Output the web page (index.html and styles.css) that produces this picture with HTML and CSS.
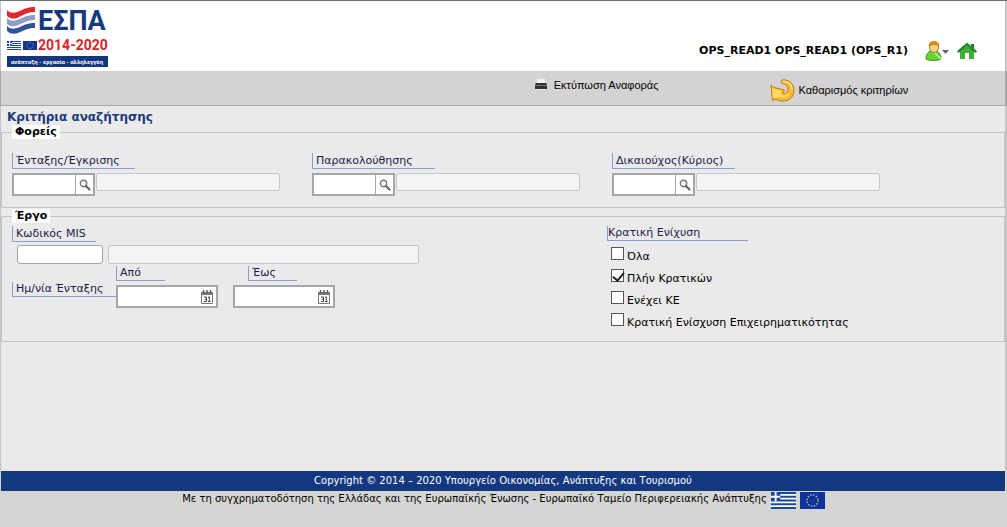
FILE: index.html
```html
<!DOCTYPE html>
<html lang="el">
<head>
<meta charset="utf-8">
<title>Κριτήρια αναζήτησης</title>
<link rel="stylesheet" href="styles.css">
</head>
<body>
<svg class="defs" aria-hidden="true">
  <symbol id="greece" viewBox="0 0 27 18" preserveAspectRatio="none">
    <path fill="#fff" d="M0 0h27v18H0z"/>
    <path fill="#17479e" d="M0 0h27v2H0zM0 4h27v2H0zM0 8h27v2H0zM0 12h27v2H0zM0 16h27v2H0zM0 0h10v10H0z"/>
    <path fill="#fff" d="M4 0h2v10H4zM0 4h10v2H0z"/>
  </symbol>
  <symbol id="europe" viewBox="0 0 27 18" preserveAspectRatio="none">
    <path fill="#10329a" d="M0 0h27v18H0z"/>
    <circle cx="13.500" cy="9" r="6" fill="none" stroke="#c9d27c" stroke-width="1.500" stroke-dasharray="1.400 1.740"/>
  </symbol>
  <symbol id="lens" viewBox="0 0 12 12">
    <circle cx="4.500" cy="4.500" r="3.200" fill="#f4f4f4" stroke="#777" stroke-width="1.400"/>
    <path d="M7 7l3.500 3.500" stroke="#666" stroke-width="2.200" stroke-linecap="round"/>
  </symbol>
  <symbol id="calendar" viewBox="0 0 12 14">
    <path d="M.5 3h11v10.500H.5z" fill="#fff" stroke="#777"/>
    <path d="M0 2h12v3H0z" fill="#777"/>
    <path d="M2.500 0v3M6 0v3M9.500 0v3" stroke="#555" stroke-width="1.400"/>
    <path d="M3 7h2.500v4.500H3M3.500 9.200h2M7 7.500l1.300-.8v5M7 11.500h2.600" fill="none" stroke="#444"/>
  </symbol>
</svg>
<div class="page">
  <header class="header">
    <svg class="logo" viewBox="0 0 102 62" role="img" aria-label="ΕΣΠΑ 2014-2020">
      <path d="M0 4C8 12 15 0 28 1v5C16 5 9 18 0 10z" fill="#e2282e"/>
      <path d="M0 12C8 20 15 8 28 9v5C16 13 9 25 0 18z" fill="#8d9cc9"/>
      <path d="M0 20C8 28 15 16 28 17v5C16 21 9 33 0 25z" fill="#32519c"/>
      <text x="31" y="24" class="logo-name">ΕΣΠΑ</text>
      <text x="31" y="44" class="logo-years">2014-2020</text>
      <use href="#greece" x="0" y="35" width="14" height="9"/>
      <use href="#europe" x="16" y="35" width="14" height="9"/>
      <path d="M0 50h101v11H0z" fill="#14357f"/>
      <text x="50" y="58" class="logo-motto">ανάπτυξη - εργασία - αλληλεγγύη</text>
    </svg>
    <div class="account">
      <span class="user">OPS_READ1 OPS_READ1 (OPS_R1)</span>
      <button class="icon-button" aria-label="Χρήστης">
        <svg width="25" height="20" viewBox="0 0 25 20">
          <path d="M1 18c0-5 2-7 5-8h5c3 1 5 4 5 8-3 2-12 2-15 0z" fill="#65d332" stroke="#36941a"/>
          <path d="M9 11l3 3 4 4" fill="none" stroke="#c6f5a5" stroke-width="1.500"/>
          <ellipse cx="9" cy="6.500" rx="4.500" ry="5" fill="#fbd58b" stroke="#b97820"/>
          <path d="M4 6C3 2 6 0 9 0s6 2 5 6c-2-2-6-3-8-1z" fill="#d78c19"/>
          <path d="M17 9h7l-3.500 4z" fill="#666"/>
        </svg>
      </button>
      <a class="icon-button" href="#" aria-label="Αρχική">
        <svg width="20" height="18" viewBox="0 0 20 18">
          <path d="M14 2h3v5h-3z" fill="#26812f"/>
          <path d="M3 8l7-6 7 6v9h-5v-6H8v6H3z" fill="#43ad3c"/>
          <path d="M1.500 9.500L10 2l8.500 7.500" fill="none" stroke="#278c31" stroke-width="2.400" stroke-linecap="round"/>
        </svg>
      </a>
    </div>
  </header>

  <nav class="toolbar">
    <button class="tool tool-print">
      <svg width="12" height="12" viewBox="0 0 12 12">
        <path d="M2 0h8v5H2z" fill="#f5f5f5"/>
        <path d="M1 4h10l1 2v4H0V6z" fill="#333"/>
        <path d="M0 6h12v1H0z" fill="#777"/>
        <path d="M2 10h8v1H2z" fill="#eee"/>
      </svg>
      Εκτύπωση Αναφοράς
    </button>
    <button class="tool tool-clear">
      <svg width="25" height="23" viewBox="0 0 25 23">
        <path d="M12 1C19 0 24 5 24 11.500S19 22 13 22c-3 0-5-.5-7-2l-3.500 1.500L1 6l3 2.500L14.500 11l-2 3c3 1 5.500-1 5.500-4s-2-5-5.500-5.500c-1.500-.5-2-2-.5-3.500z" fill="#fbb92f" stroke="#c4780f" stroke-linejoin="round"/>
        <path d="M2 8l2 1.800 8.500 2L10 15c4 2.500 8 1 9.500-2 1 4-4 7-10 5L3 19.500z" fill="#ffda66"/>
        <path d="M13 2.500c6-.5 9.500 4 9 8.500" fill="none" stroke="#ffe694" stroke-width="1.500" stroke-linecap="round"/>
      </svg>
      Καθαρισμός κριτηρίων
    </button>
  </nav>

  <main class="main">
    <h1 class="title">Κριτήρια αναζήτησης</h1>

    <fieldset class="group bodies">
      <legend>Φορείς</legend>
      <div class="lookup">
        <label class="caption caption-wide" for="approval">Ένταξης/Έγκρισης</label>
        <div class="lookup-row">
          <div class="lookup-box"><input id="approval" type="text"><button aria-label="Αναζήτηση"><svg width="12" height="12"><use href="#lens"/></svg></button></div>
          <input class="readonly" type="text" readonly aria-label="Περιγραφή ένταξης">
        </div>
      </div>
      <div class="lookup">
        <label class="caption caption-wide" for="monitor">Παρακολούθησης</label>
        <div class="lookup-row">
          <div class="lookup-box"><input id="monitor" type="text"><button aria-label="Αναζήτηση"><svg width="12" height="12"><use href="#lens"/></svg></button></div>
          <input class="readonly" type="text" readonly aria-label="Περιγραφή παρακολούθησης">
        </div>
      </div>
      <div class="lookup">
        <label class="caption caption-wide" for="owner">Δικαιούχος(Κύριος)</label>
        <div class="lookup-row">
          <div class="lookup-box"><input id="owner" type="text"><button aria-label="Αναζήτηση"><svg width="12" height="12"><use href="#lens"/></svg></button></div>
          <input class="readonly" type="text" readonly aria-label="Περιγραφή δικαιούχου">
        </div>
      </div>
    </fieldset>

    <fieldset class="group project">
      <legend>Έργο</legend>
      <div class="project-grid">
        <div class="details">
          <label class="caption caption-code" for="mis">Κωδικός MIS</label>
          <div class="code-row">
            <input id="mis" class="code" type="text">
            <input class="readonly" type="text" readonly aria-label="Τίτλος έργου">
          </div>
          <div class="dates">
            <span class="caption date-caption">Ημ/νία Ένταξης</span>
            <div class="date">
              <label class="caption caption-short" for="from">Από</label>
              <div class="date-box"><input id="from" type="text"><button aria-label="Ημερολόγιο"><svg width="12" height="14"><use href="#calendar"/></svg></button></div>
            </div>
            <div class="date">
              <label class="caption caption-short caption-inset" for="to">Έως</label>
              <div class="date-box"><input id="to" type="text"><button aria-label="Ημερολόγιο"><svg width="12" height="14"><use href="#calendar"/></svg></button></div>
            </div>
          </div>
        </div>
        <div class="aid">
          <span class="caption caption-aid">Κρατική Ενίχυση</span>
          <div class="checks">
            <label><input type="checkbox"><span>Όλα</span></label>
            <label><input type="checkbox" checked><span>Πλήν Κρατικών</span></label>
            <label><input type="checkbox"><span>Ενέχει ΚΕ</span></label>
            <label><input type="checkbox"><span>Κρατική Ενίσχυση Επιχειρηματικότητας</span></label>
          </div>
        </div>
      </div>
    </fieldset>
  </main>

  <footer class="footer">
    <p class="copyright">Copyright © 2014 – 2020 Υπουργείο Οικονομίας, Ανάπτυξης και Τουρισμού</p>
    <div class="funding">
      <span>Με τη συγχρηματοδότηση της Ελλάδας και της Ευρωπαϊκής Ένωσης - Ευρωπαϊκό Ταμείο Περιφερειακής Ανάπτυξης</span>
      <svg width="25" height="17"><use href="#greece"/></svg>
      <svg width="25" height="17"><use href="#europe"/></svg>
    </div>
  </footer>
</div>
</body>
</html>
```
FILE: styles.css
```css
* { box-sizing: border-box; }

body {
  margin: 0;
  font: 11px/14px "DejaVu Sans", Verdana, sans-serif;
  color: #000;
  background: #d4d6d3;
}

button, input { font: inherit; color: inherit; margin: 0; }
button { padding: 0; border: 0; background: none; cursor: pointer; }
input[type="text"] { min-width: 0; padding: 0 3px; border: 0; background: #fff; }
svg { display: block; flex: none; }
.defs { position: absolute; width: 0; height: 0; }

.page {
  display: flex;
  flex-direction: column;
  min-height: 100vh;
  border-top: 1px solid #6e6e6e;
}

.header {
  display: flex;
  justify-content: space-between;
  height: 70px;
  padding: 5px 28px 0 6px;
  background: #fff;
  border-left: 1px solid #c4c4c4;
  border-right: 2px solid #c4c4c4;
}
.logo { width: 102px; height: 62px; }
.logo-name { font: bold 27px Roboto, sans-serif; fill: #17387f; }
.logo-years { font: bold 14px Roboto, sans-serif; fill: #dc1f26; }
.logo-motto { font: bold 6px Roboto, sans-serif; fill: #fff; text-anchor: middle; }

.account { display: flex; align-items: center; gap: 7px; padding-top: 24px; }
.user { margin-right: 10px; font-weight: bold; }

.toolbar {
  display: flex;
  height: 35px;
  padding-left: 53%;
  background: #d3d3d3;
  border: solid #a8a8a8;
  border-width: 0 2px 1px 1px;
}
.tool {
  display: flex;
  align-items: center;
  gap: 3px;
  font-family: "Liberation Sans", Arial, sans-serif;
  font-size: 11px;
}
.tool-print { gap: 7px; padding-bottom: 6px; }
.tool-clear { margin-left: 112px; padding-top: 4px; }

.main {
  flex: 1;
  padding-top: 3px;
  background: #eaeaea;
  border-left: 1px solid #c4c4c4;
  border-right: 2px solid #c4c4c4;
}
.title {
  margin: 0 0 0 6px;
  font-size: 12px;
  line-height: 16px;
  color: #1d3a7c;
}

.group { min-width: 0; margin: 0 0 1px; padding: 0 10px; border: 1px solid #c4c4c4; }
.group legend { padding: 0 3px; font-weight: bold; background: #fff; }

.bodies {
  display: grid;
  grid-template-columns: 300px 300px 1fr;
  padding-top: 14px;
  padding-bottom: 11px;
}
.caption {
  display: block;
  width: fit-content;
  height: 16px;
  padding-top: 1px;
  padding-left: 3px;
  color: #1b1b4b;
  border: solid #8b9bd6;
  border-width: 0 0 1px 1px;
}
.caption-wide { width: 123px; }
.lookup-row { display: flex; gap: 1px; width: 268px; margin-top: 4px; }
.lookup-box, .date-box { display: flex; height: 23px; background: #fff; border: 2px solid #a6a6a6; }
.lookup-box { width: 83px; }
.lookup-box input, .date-box input { flex: 1; }
.lookup-box button { display: grid; place-items: center; width: 18px; border-left: 1px solid #a6a6a6; }
input.readonly {
  flex: 1;
  height: 18px;
  background: #f4f4f4;
  border: 1px solid #c8c8c8;
  border-radius: 2px;
}

.project-grid { display: grid; grid-template-columns: 595px 1fr; padding: 3px 0 7px; }
.caption-code { width: 84px; }
.code-row { display: flex; gap: 5px; width: 402px; margin: 3px 0 0 5px; }
.code-row input.readonly { height: 19px; }
.code-row input.code { width: 86px; height: 19px; border: 1px solid #a6a6a6; border-radius: 3px; }

.dates { display: flex; margin-top: 2px; }
.date-caption { width: 104px; height: 15px; margin-top: 16px; white-space: nowrap; }
.date { margin-right: 15px; }
.caption-short, .caption-aid, .date-caption { padding-top: 0; }
.caption-short { width: 49px; height: 15px; }
.caption-inset { margin-left: 15px; }
.date-box { width: 102px; margin-top: 4px; }
.date-box button { padding: 0 3px; }

.caption-aid { width: 141px; padding-left: 0; height: 15px; }
.checks { display: grid; justify-items: start; margin: 5px 0 0 4px; }
.checks label { display: flex; gap: 3px; height: 22px; padding-top: 1px; }
.checks span { padding-top: 3px; }
.checks input {
  appearance: none;
  width: 13px;
  height: 13px;
  background: #fff;
  border: 1px solid #555;
}
.checks input:checked::before {
  content: "";
  display: block;
  width: 5px;
  height: 9px;
  margin-left: 3px;
  border: solid #222;
  border-width: 0 2px 2px 0;
  transform: rotate(40deg);
}

.footer { min-height: 56px; font-size: 10px; text-align: center; }
.copyright {
  margin: 0 2px 0 1px;
  padding: 3px 0;
  color: #fff;
  background: #14387f;
}
.funding { display: flex; justify-content: center; gap: 4px; padding-top: 1px; }
```
